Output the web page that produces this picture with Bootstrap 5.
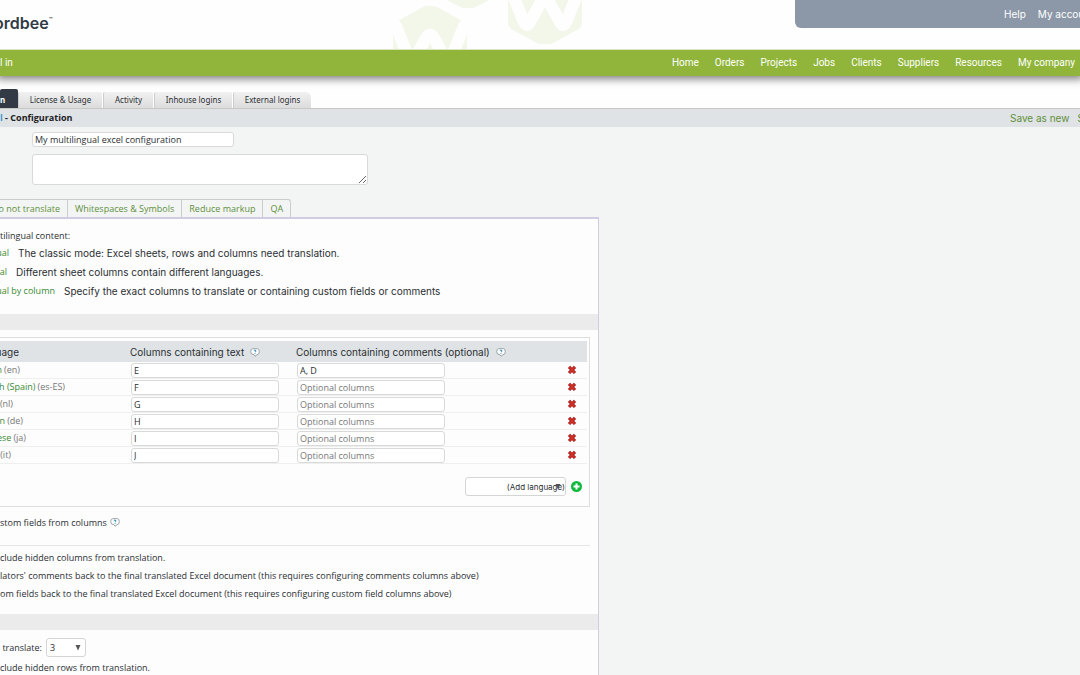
<!DOCTYPE html>
<html lang="en">
<head>
<meta charset="utf-8">
<meta name="viewport" content="width=device-width, initial-scale=1">
<title>Wordbee - Configuration</title>
<link href="https://cdn.jsdelivr.net/npm/bootstrap@5.3.0/dist/css/bootstrap.min.css" rel="stylesheet">
<style>
  body { font: 9px/14px "Open Sans", "Noto Sans", sans-serif; color: #2b2f33; background: #f3f5f5; overflow: hidden; white-space: nowrap; }
  a { text-decoration: none; color: #5f8f3c; }
  input, select, textarea, button { font: inherit; color: inherit; }
  .top-head { height: 50px; background: #fefefe; border-bottom: 1px solid #dbe5c0; overflow: hidden; }
  .emblems { position: absolute; left: 0; top: 0; }
  .brand { font: 600 16px/20px Inter, sans-serif; color: #323a46; margin: 13px 0 0 -6px; }
  .brand sup { font-size: 6px; top: -7px; }
  .account { width: 285px; height: 28px; background: #8c98a7; border-radius: 0 0 0 6px; padding-left: 209px; gap: 12px; font: 10px/14px Inter, sans-serif; }
  .account a { color: #fff; }
  .main-nav { height: 26px; background: #90b53a; box-shadow: 0 0 8px 3px rgba(0,0,0,.5); clip-path: inset(0 0 -14px 0); font: 10px/14px Roboto, "Liberation Sans", sans-serif; position: relative; padding-right: 5px; }
  .main-nav a { color: #fff; }
  .main-nav ul { gap: 16px; }
  .tab-row { height: 32px; background: #fefefe; }
  .tab-row a { height: 16px; color: #2b2f33; background: linear-gradient(#f1f1f1, #dcdcdc); border-right: 1px solid #fff; border-left: 1px solid #ccc; border-radius: 2px 2px 0 0; font: 8px/16px "Noto Sans", sans-serif; text-align: center; }
  .tab-row a:last-child { border-radius: 2px 6px 0 0; }
  .tab-row a.current { height: 19px; width: 18px; background: #323a46; color: #fff; font-weight: 700; line-height: 22px; border: 0; text-align: left; }
  .title-row { height: 19px; background: #dfe3e5; border-top: 1px solid #c6c8c6; font: 700 9px/14px "Open Sans", sans-serif; color: #1d2023; }
  .title-row .save { font: 10px/14px Inter, sans-serif; gap: 8px; width: 70px; }
  .field { border: 1px solid #d8dada; border-radius: 3px; background: #fff; padding: 0 2px; display: block; }
  .form-top { padding: 5px 0 0 32px; }
  .name-field { width: 202px; height: 15px; }
  .note-field { width: 336px; height: 31px; margin-top: 7px; }
  .sub-tabs { margin-top: 14px; height: 18px; }
  .sub-tabs a { border: 1px solid #ccc; border-bottom: 0; border-left: 0; padding: 2px 7px 0; }
  .sub-tabs a:last-child { border-top-right-radius: 3px; }
  .sub-tabs a:first-child { padding-left: 0; width: 68px; }
  .config { width: 599px; background: #fdfdfd; border: 1px solid #d0cde2; border-width: 2px 1px 0 0; padding: 10px 0 16px; }
  .mode { height: 19px; gap: 9px; font: 10px/14px Inter, sans-serif; }
  .modes { margin-bottom: 14px; }
  .mode a, .lang a { color: #3a8a35; font: 9px/14px "Open Sans", sans-serif; }
  .cut { display: flex; justify-content: flex-end; overflow: hidden; }
  .band { height: 16px; background: #ebebeb; }
  .lang-box { margin: 7px 8px 0 0; border: 1px solid #dedede; border-left: 0; padding: 3px 2px 0 0; height: 170px; }
  .lang-table { width: 100%; table-layout: fixed; border-collapse: separate; border-spacing: 0; }
  .lang-table th { height: 21px; background: #dfe3e5; font: 10px/14px Inter, sans-serif; padding: 0; }
  .lang-table th svg { margin-left: 3px; }
  .lang-table td { height: 17px; border-bottom: 1px solid #efefef; padding: 0; }
  .lang-table .field { width: 148px; height: 15px; margin-left: 1px; }
  .lang-table .field::placeholder { color: #777; opacity: 1; }
  .lang { color: #777; gap: 2px; }
  .plain { border: 0; background: none; padding: 0; display: block; line-height: 0; }
  .add-row { margin-top: 13px; gap: 5px; padding-right: 5px; }
  .picker { appearance: none; background: #fff; border: 1px solid #d4d6d6; border-radius: 3px; height: 19px; padding: 0; }
  .picker.language { width: 101px; font: 8px/14px Inter, sans-serif; text-align: right; text-align-last: right; }
  .picker.rows { width: 40px; padding-left: 3px; }
  .picker-wrap { position: relative; }
  .picker-wrap svg { position: absolute; right: 5px; top: 7px; pointer-events: none; }
  .fields-row { height: 31px; gap: 3px; margin-right: 7px; }
  .checks { border-top: 1px solid #e6e6e6; margin: 7px 8px 0 0; padding-top: 3px; height: 69px; }
  .checks div { height: 18px; line-height: 18px; }
</style>
</head>
<body>
<svg width="0" height="0" class="position-absolute" aria-hidden="true">
  <symbol id="comb" viewBox="0 0 74 74">
    <path fill="#f3f7e9" d="M0 21Q0 18 3 16L28 2Q37-3 46 2L71 16Q74 18 74 21V52Q74 57 69 60L47 72Q37 77 27 72L5 60Q0 57 0 52Z"/>
    <path fill="none" stroke="#fefefe" stroke-width="12" stroke-linecap="round" stroke-linejoin="round" d="M3 20L15 50Q19 60 23 50L33 32Q37 25 41 32L51 50Q55 60 59 50L71 20"/>
  </symbol>
  <symbol id="hint" viewBox="0 0 10 9">
    <path d="M2.500.7h5Q9.300.7 9.300 3.800 9.300 6.500 7 6.700L5 8.300 4 6.700Q.7 6.700.7 3.800.7.700 2.500.700Z" fill="#fff" stroke="#9aa3a8"/>
    <path d="M3.800 2.600Q5 1.500 6 2.700 6.300 3.500 5 4.100M5 5v.8" fill="none" stroke="#2e8fc4"/>
  </symbol>
  <symbol id="cross" viewBox="0 0 10 10">
    <path d="M2 1.800L8 8M8 1.800L2 8" stroke="#a81818" stroke-width="3.200"/>
    <path d="M2.500 2.200L7.500 7.600M7.500 2.200L2.500 7.600" stroke="#d03428" stroke-width="1.600"/>
  </symbol>
  <symbol id="arrow" viewBox="0 0 6 6"><path d="M.5 0h5L3 5.500Z" fill="#555"/></symbol>
</svg>

<header class="top-head position-relative d-flex justify-content-between">
  <svg class="emblems" width="600" height="49" aria-hidden="true">
    <use href="#comb" x="393" y="6" width="74" height="74"/>
    <use href="#comb" x="431" y="-66" width="74" height="74"/>
    <use href="#comb" x="508" y="-30" width="74" height="74"/>
  </svg>
  <a class="brand position-relative" href="#">ordbee<sup>™</sup></a>
  <div class="account d-flex align-items-center position-relative"><a href="#">Help</a><a href="#">My accou</a></div>
</header>

<nav class="main-nav d-flex align-items-center justify-content-between">
  <span class="text-white">l in</span>
  <ul class="list-unstyled d-flex mb-0">
    <li><a href="#">Home</a></li><li><a href="#">Orders</a></li><li><a href="#">Projects</a></li><li><a href="#">Jobs</a></li><li><a href="#">Clients</a></li><li><a href="#">Suppliers</a></li><li><a href="#">Resources</a></li><li><a href="#">My company</a></li>
  </ul>
</nav>

<div class="tab-row d-flex align-items-end">
  <a class="current" href="#">n</a><a href="#" style="width:85px">License &amp; Usage</a><a href="#" style="width:51px">Activity</a><a href="#" style="width:79px">Inhouse logins</a><a href="#" style="width:79px">External logins</a>
</div>

<div class="title-row d-flex align-items-center justify-content-between">
  <span><a href="#" style="color:#3f9bd0">l</a> - Configuration</span>
  <div class="save d-flex"><a href="#">Save as new</a><a href="#">S</a></div>
</div>

<main>
  <form>
    <div class="form-top">
      <input class="field name-field" aria-label="Name" value="My multilingual excel configuration">
      <textarea class="field note-field" aria-label="Description"></textarea>
    </div>
    <nav class="sub-tabs d-flex">
      <a class="cut" href="#">Do not translate</a><a href="#">Whitespaces &amp; Symbols</a><a href="#">Reduce markup</a><a href="#">QA</a>
    </nav>

    <section class="config">
      <div>tilingual content:</div>
      <div class="modes">
        <div class="mode d-flex align-items-center"><a class="cut" style="width:9px" href="#">ual</a><span>The classic mode: Excel sheets, rows and columns need translation.</span></div>
        <div class="mode d-flex align-items-center"><a class="cut" style="width:7px" href="#">al</a><span>Different sheet columns contain different languages.</span></div>
        <div class="mode d-flex align-items-center"><a class="cut" style="width:55px" href="#">ual by column</a><span>Specify the exact columns to translate or containing custom fields or comments</span></div>
      </div>
      <div class="band"></div>

      <div class="lang-box">
        <table class="lang-table">
          <colgroup><col style="width:130px"><col style="width:166px"><col><col style="width:20px"></colgroup>
          <thead><tr>
            <th><span class="cut" style="width:19px">uage</span></th>
            <th>Columns containing text <svg width="10" height="9"><use href="#hint"/></svg></th>
            <th>Columns containing comments (optional) <svg width="10" height="9"><use href="#hint"/></svg></th>
            <th></th>
          </tr></thead>
          <tbody>
            <tr><td><span class="lang cut" style="width:20px"><a href="#">n</a>(en)</span></td><td><input class="field" aria-label="Text columns, en" value="E"></td><td><input class="field" aria-label="Comment columns, en" placeholder="Optional columns" value="A, D"></td><td><button type="button" class="plain" aria-label="Remove"><svg width="10" height="10"><use href="#cross"/></svg></button></td></tr>
            <tr><td><span class="lang cut" style="width:65px"><a href="#">h (Spain)</a>(es-ES)</span></td><td><input class="field" aria-label="Text columns, es-ES" value="F"></td><td><input class="field" aria-label="Comment columns, es-ES" placeholder="Optional columns"></td><td><button type="button" class="plain" aria-label="Remove"><svg width="10" height="10"><use href="#cross"/></svg></button></td></tr>
            <tr><td><span class="lang cut" style="width:13px">(nl)</span></td><td><input class="field" aria-label="Text columns, nl" value="G"></td><td><input class="field" aria-label="Comment columns, nl" placeholder="Optional columns"></td><td><button type="button" class="plain" aria-label="Remove"><svg width="10" height="10"><use href="#cross"/></svg></button></td></tr>
            <tr><td><span class="lang cut" style="width:23px"><a href="#">n</a>(de)</span></td><td><input class="field" aria-label="Text columns, de" value="H"></td><td><input class="field" aria-label="Comment columns, de" placeholder="Optional columns"></td><td><button type="button" class="plain" aria-label="Remove"><svg width="10" height="10"><use href="#cross"/></svg></button></td></tr>
            <tr><td><span class="lang cut" style="width:26px"><a href="#">ese</a>(ja)</span></td><td><input class="field" aria-label="Text columns, ja" value="I"></td><td><input class="field" aria-label="Comment columns, ja" placeholder="Optional columns"></td><td><button type="button" class="plain" aria-label="Remove"><svg width="10" height="10"><use href="#cross"/></svg></button></td></tr>
            <tr><td><span class="lang cut" style="width:11px">(it)</span></td><td><input class="field" aria-label="Text columns, it" value="J"></td><td><input class="field" aria-label="Comment columns, it" placeholder="Optional columns"></td><td><button type="button" class="plain" aria-label="Remove"><svg width="10" height="10"><use href="#cross"/></svg></button></td></tr>
          </tbody>
        </table>
        <div class="add-row d-flex align-items-center justify-content-end">
          <span class="picker-wrap d-flex"><select class="picker language" aria-label="Add language"><option>(Add language)</option></select><svg width="6" height="6"><use href="#arrow"/></svg></span>
          <button type="button" class="plain" aria-label="Add"><svg width="11" height="11" viewBox="0 0 11 11"><circle cx="5.500" cy="5.500" r="5.500" fill="#10b93c"/><path d="M5.500 2.500v6M2.500 5.500h6" stroke="#fff" stroke-width="2"/></svg></button>
        </div>
      </div>

      <div class="fields-row d-flex align-items-center"><span>stom fields from columns</span><svg width="10" height="9"><use href="#hint"/></svg></div>
      <div class="checks">
        <div>clude hidden columns from translation.</div>
        <div>lators' comments back to the final translated Excel document (this requires configuring comments columns above)</div>
        <div>om fields back to the final translated Excel document (this requires configuring custom field columns above)</div>
      </div>
      <div class="band"></div>
      <div class="d-flex align-items-center mt-2 gap-1">
        <label class="cut" style="width:42px" for="rows">o translate:</label>
        <span class="picker-wrap d-flex"><select id="rows" class="picker rows"><option>3</option></select><svg width="6" height="6"><use href="#arrow"/></svg></span>
      </div>
      <div class="mt-1">clude hidden rows from translation.</div>
    </section>
  </form>
</main>
<script src="https://cdn.jsdelivr.net/npm/bootstrap@5.3.0/dist/js/bootstrap.bundle.min.js"></script>
</body>
</html>
